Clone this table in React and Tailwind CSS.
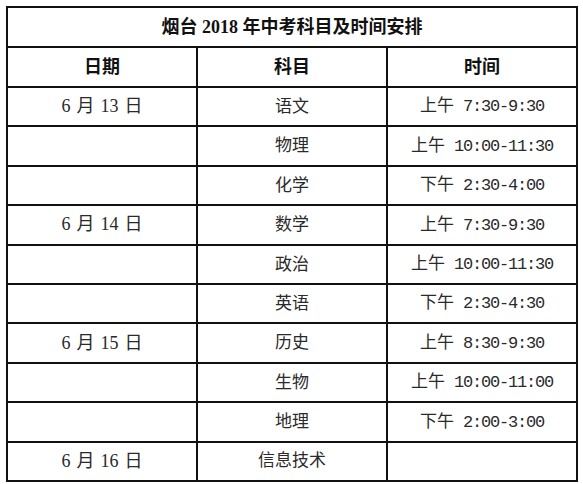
import React from 'react';

const rows = [
  ['6|月|13|日', '语文', '上午', '7:30-9:30'],
  ['', '物理', '上午', '10:00-11:30'],
  ['', '化学', '下午', '2:30-4:00'],
  ['6|月|14|日', '数学', '上午', '7:30-9:30'],
  ['', '政治', '上午', '10:00-11:30'],
  ['', '英语', '下午', '2:30-4:30'],
  ['6|月|15|日', '历史', '上午', '8:30-9:30'],
  ['', '生物', '上午', '10:00-11:00'],
  ['', '地理', '下午', '2:00-3:00'],
  ['6|月|16|日', '信息技术', '', ''],
];

const serif = { fontFamily: '"Liberation Serif", "Noto Sans CJK SC", serif' };

function DateText({ value }) {
  if (!value) return null;
  return (
    <span className="inline-flex items-baseline gap-[6px]">
      {value.split('|').map((p, i) => (
        <span key={i}>{p}</span>
      ))}
    </span>
  );
}

export default function App() {
  return (
    <div className="w-[583px] h-[484px] bg-white pt-[6px] pl-[6px]">
      <table
        className="w-[572px] border-collapse table-fixed text-[#2a2a2a]"
        style={serif}
      >
        <tbody>
          <tr className="h-[40px]">
            <td colSpan={3} className="border-2 border-[#111] text-center text-[18px] font-bold text-[#111]">
              烟台 2018 年中考科目及时间安排
            </td>
          </tr>
          <tr className="h-[40px]">
            <td className="border-2 border-[#111] text-center text-[18px] font-bold text-[#111]">日期</td>
            <td className="border-2 border-[#111] text-center text-[18px] font-bold text-[#111]">科目</td>
            <td className="border-2 border-[#111] text-center text-[18px] font-bold text-[#111]">时间</td>
          </tr>
          {rows.map((r, i) => (
            <tr key={i} className="h-[39.4px]">
              <td className="border-2 border-[#111] text-center text-[18px]">
                <DateText value={r[0]} />
              </td>
              <td className="border-2 border-[#111] text-center text-[17px]">{r[1]}</td>
              <td className="border-2 border-[#111] text-center text-[17px]">
                {r[2] && (
                  <span>
                    {r[2]}
                    <span className="ml-[9px] font-['Liberation_Mono',monospace] text-[17px] tracking-[-1.2px]">{r[3]}</span>
                  </span>
                )}
              </td>
            </tr>
          ))}
        </tbody>
      </table>
    </div>
  );
}
